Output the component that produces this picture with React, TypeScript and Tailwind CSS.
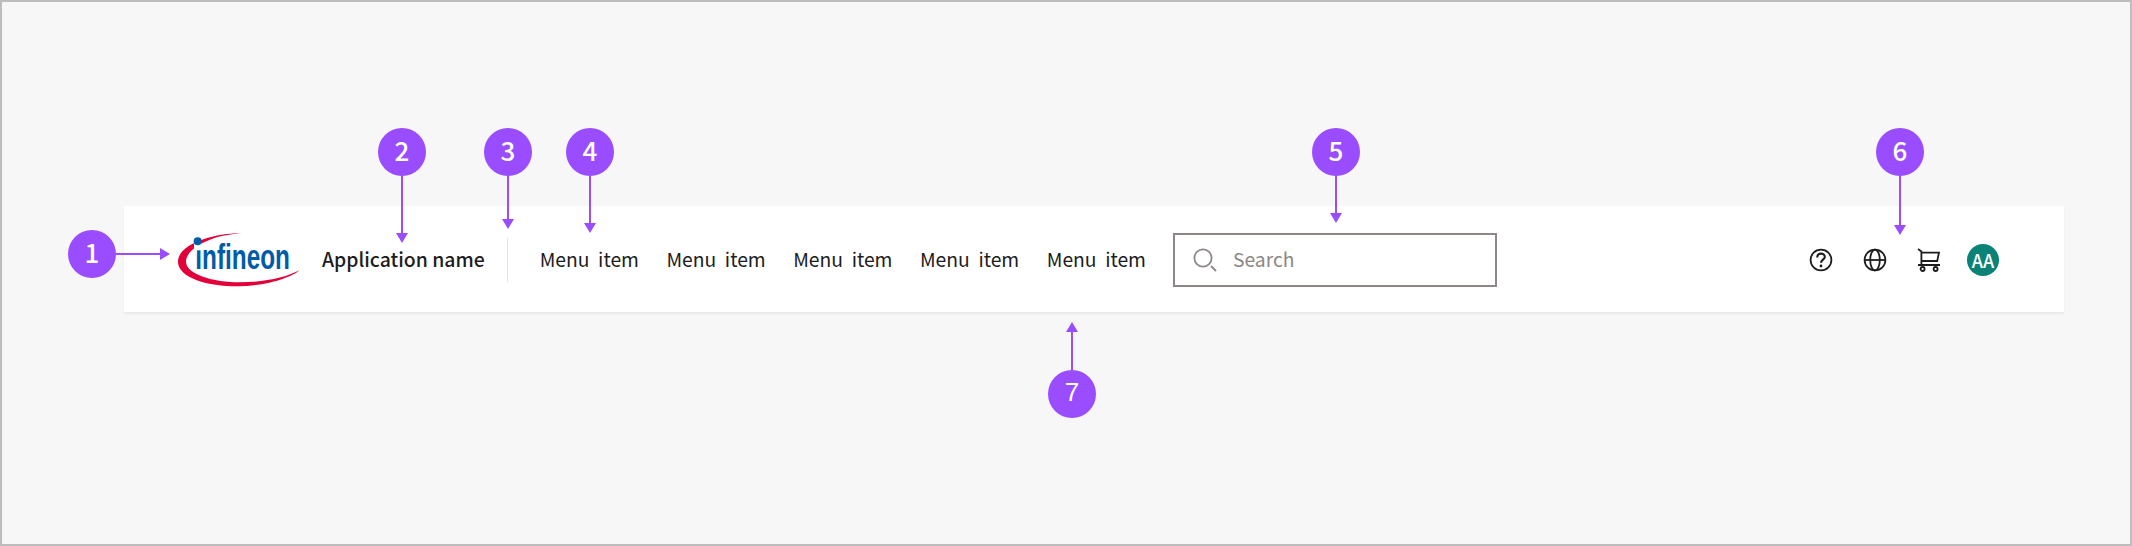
const fontClass = "font-['Noto_Sans_CJK_SC','Noto_Sans',sans-serif]";

const menuItems = ['Menu  item', 'Menu  item', 'Menu  item', 'Menu  item', 'Menu  item'];

const InfineonLogo = () => (
	<svg width="122" height="54" viewBox="54 39 366 162" className="shrink-0">
		<path
			fill="#e3003a"
			d="M245 40 C170 38 54 70 54 125 C54 175 150 200 235 199 C320 198 395 172 420 150 C380 172 310 187 240 187 C160 187 78 162 78 125 C78 95 120 68 170 52 C195 45 220 42 245 40 Z"
		/>
		<g transform="translate(106 146) scale(0.73 1.05)">
			<text x="0" y="0" fontSize="100" fontWeight="700" fill="#005ca9" fontFamily="'Liberation Sans', sans-serif">
				infineon
			</text>
		</g>
		<rect x="102" y="70" width="22" height="21" fill="#ffffff" />
		<circle cx="113" cy="64" r="12" fill="#005ca9" />
	</svg>
);

const SearchIcon = () => (
	<svg width="24" height="24" viewBox="0 0 24 24" fill="none" stroke="#8d8786" strokeWidth="1.8" className="shrink-0">
		<circle cx="10" cy="10" r="8.6" />
		<path d="M18 18 L23 23" />
	</svg>
);

const HelpIcon = () => (
	<svg width="24" height="24" viewBox="0 0 24 24" fill="none" stroke="#1d1d1d" strokeWidth="1.8">
		<circle cx="12" cy="12" r="10.4" />
		<path d="M8.2 9.4 C8.2 7 10 5.6 12 5.6 C14.1 5.6 15.8 7 15.8 9 C15.8 11.6 12 11.8 12 14.8" strokeWidth="2.1" />
		<circle cx="12" cy="18" r="1.4" fill="#1d1d1d" stroke="none" />
	</svg>
);

const GlobeIcon = () => (
	<svg width="24" height="24" viewBox="0 0 24 24" fill="none" stroke="#1d1d1d" strokeWidth="1.8">
		<circle cx="12" cy="12" r="10.4" />
		<ellipse cx="12" cy="12" rx="4.8" ry="10.4" />
		<path d="M1.6 12 H22.4" />
	</svg>
);

const CartIcon = () => (
	<svg width="24" height="24" viewBox="0 0 24 24" fill="none" stroke="#1d1d1d" strokeWidth="1.8">
		<path d="M1 1 L4.4 3.4 L4.4 16.4 M4.4 4.6 H22 L20.2 13 H4.4 M1 17 H23" />
		<circle cx="5.6" cy="21" r="2" />
		<circle cx="18.6" cy="21" r="2" />
	</svg>
);

const Dot = ({ children, className = '' }: { children: string; className?: string }) => (
	<div
		className={`flex h-12 w-12 shrink-0 items-center justify-center rounded-full bg-[#994dff] pb-[4px] text-[26px] leading-none font-medium text-white ${className}`}
	>
		{children}
	</div>
);

const ArrowDown = () => (
	<div className="h-0 w-0 border-x-[6px] border-t-[10px] border-x-transparent border-t-[#994dff]" />
);

const Line = ({ className }: { className: string }) => <div className={`w-[2px] bg-[#994dff] ${className}`} />;

const Callouts = () => (
	<>
		<div className="absolute left-[66px] top-[228px] flex items-center">
			<Dot>1</Dot>
			<div className="h-[2px] w-[44px] bg-[#994dff]" />
			<div className="h-0 w-0 border-y-[6px] border-l-[10px] border-y-transparent border-l-[#994dff]" />
		</div>
		<div className="absolute left-[376px] top-[126px] flex w-12 flex-col items-center">
			<Dot>2</Dot>
			<Line className="h-[57px]" />
			<ArrowDown />
		</div>
		<div className="absolute left-[482px] top-[126px] flex w-12 flex-col items-center">
			<Dot>3</Dot>
			<Line className="h-[43px]" />
			<ArrowDown />
		</div>
		<div className="absolute left-[564px] top-[126px] flex w-12 flex-col items-center">
			<Dot>4</Dot>
			<Line className="h-[47px]" />
			<ArrowDown />
		</div>
		<div className="absolute left-[1310px] top-[126px] flex w-12 flex-col items-center">
			<Dot>5</Dot>
			<Line className="h-[37px]" />
			<ArrowDown />
		</div>
		<div className="absolute left-[1874px] top-[126px] flex w-12 flex-col items-center">
			<Dot>6</Dot>
			<Line className="h-[49px]" />
			<ArrowDown />
		</div>
		<div className="absolute left-[1046px] top-[320px] flex w-12 flex-col items-center">
			<div className="h-0 w-0 border-x-[6px] border-b-[10px] border-x-transparent border-b-[#994dff]" />
			<Line className="h-[38px]" />
			<Dot className="font-['Liberation_Sans',sans-serif]">7</Dot>
		</div>
	</>
);

export default function App() {
	return (
		<div className={`relative h-[546px] w-[2132px] border-2 border-[#bdbdbd] bg-[#f7f7f7] pl-[122px] pt-[204px] ${fontClass}`}>
			<nav className="flex h-[106px] w-[1940px] items-center bg-white pl-[54px] pr-[65px] pt-[2px] shadow-[0_2px_2px_rgba(0,0,0,0.06)]">
				<InfineonLogo />
				<span className="ml-[22px] pb-[2px] text-[19.4px] leading-7 font-medium whitespace-nowrap text-[#1d1d1d]">Application name</span>
				<div className="ml-[22px] h-[44px] w-px bg-[#e3e3e3]" />
				<div className="ml-[32px] flex items-center gap-[27.5px]">
					{menuItems.map((item, index) => (
						<span key={`menu-${index}`} className="pb-[2px] text-[19.3px] leading-7 whitespace-pre text-[#1d1d1d]">
							{item}
						</span>
					))}
				</div>
				<div className="ml-[27px] flex h-[54px] w-[324px] items-center gap-4 border-2 border-[#8d8786] pl-[18px]">
					<SearchIcon />
					<span className="pb-[2px] text-[19.3px] leading-7 text-[#8d8786]">Search</span>
				</div>
				<div className="ml-auto flex items-center gap-[30px]">
					<HelpIcon />
					<GlobeIcon />
					<CartIcon />
					<div className="-ml-[4px] flex h-8 w-8 items-center justify-center rounded-full bg-[#0a8276] text-[18px] leading-none font-medium text-white">
						AA
					</div>
				</div>
			</nav>
			<Callouts />
		</div>
	);
}
